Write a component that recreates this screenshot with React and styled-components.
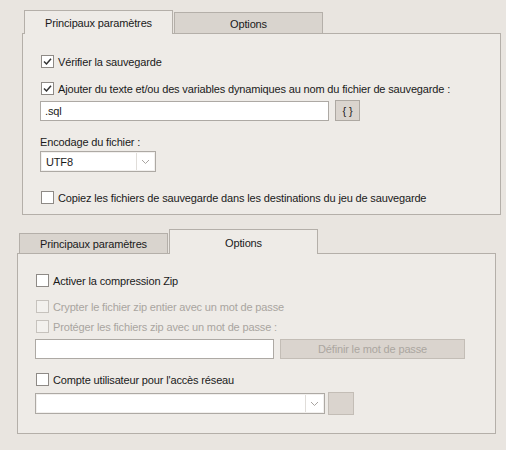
import React from 'react';
import styled, { createGlobalStyle } from 'styled-components';

const GlobalStyle = createGlobalStyle`
  html, body {
    margin: 0;
    padding: 0;
    background: #E9E5E0;
  }
  body {
    font-family: "Liberation Sans", Arial, sans-serif;
    font-size: 11px;
    letter-spacing: -0.15px;
    color: #1a1a1a;
  }
`;

const Page = styled.div`
  width: 506px;
  height: 450px;
  padding-top: 10px;
  box-sizing: border-box;
`;

const TabBlock = styled.div`
  margin-left: ${(p) => p.left}px;
  width: ${(p) => p.width}px;
  margin-top: ${(p) => p.top || 0}px;
`;

const TabStrip = styled.div`
  display: flex;
  align-items: flex-end;
  padding-left: 2px;
  position: relative;
  z-index: 1;
  margin-bottom: -1px;
`;

const Tab = styled.div`
  width: 149px;
  height: ${(p) => p.tall}px;
  box-sizing: border-box;
  display: flex;
  align-items: center;
  justify-content: center;
  padding-top: 1px;
  border: 1px solid #B4AFA9;
  border-bottom: ${(p) => (p.active ? 'none' : '1px solid #B4AFA9')};
  background: ${(p) => (p.active ? '#EEEBE7' : '#D9D4CE')};
  font-size: 11px;
  color: #1a1a1a;
  & + & {
    margin-left: 1px;
  }
`;

const Panel = styled.div`
  background: #EEEBE7;
  border: 1px solid #B4AFA9;
  box-sizing: border-box;
  padding: 0 17px ${(p) => p.bottom}px 17px;
  display: flex;
  flex-direction: column;
  align-items: flex-start;
`;

const Row = styled.div`
  display: flex;
  align-items: center;
  gap: ${(p) => p.gap || 0}px;
  margin-top: ${(p) => p.top || 0}px;
`;

const CheckRow = styled.label`
  display: flex;
  align-items: center;
  height: 13px;
  margin-top: ${(p) => p.top || 0}px;
  margin-left: 1px;
  color: ${(p) => (p.disabled ? '#A9A5A0' : '#1a1a1a')};
  white-space: nowrap;
`;

const Box = styled.span`
  width: 13px;
  height: 13px;
  box-sizing: border-box;
  border: 1px solid ${(p) => (p.disabled ? '#C6C2BD' : '#8E8A86')};
  background: ${(p) => (p.disabled ? '#F3F1EE' : '#FFFFFF')};
  margin-right: 4px;
  display: flex;
  align-items: center;
  justify-content: center;
  flex: none;
`;

const Label = styled.div`
  margin-top: ${(p) => p.top || 0}px;
  height: 13px;
  line-height: 13px;
`;

const TextInput = styled.div`
  width: ${(p) => p.width}px;
  height: 20px;
  box-sizing: border-box;
  border: 1px solid #ADA9A4;
  background: #fff;
  padding: 0 4px;
  display: flex;
  align-items: center;
`;

const Button = styled.div`
  width: ${(p) => p.width}px;
  height: ${(p) => p.height || 21}px;
  box-sizing: border-box;
  background: #DAD4CE;
  border: 1px solid ${(p) => (p.disabled ? '#C3BDB6' : '#ADA8A2')};
  color: ${(p) => (p.disabled ? '#ABA6A0' : '#1a1a1a')};
  display: flex;
  align-items: center;
  justify-content: center;
  font-size: 11px;
`;

const Combo = styled.div`
  width: ${(p) => p.width}px;
  height: 21px;
  box-sizing: border-box;
  border: 1px solid #ADA9A4;
  background: #F2F0EE;
  padding: 1px;
  display: flex;
`;

const ComboText = styled.div`
  flex: 1;
  background: #fff;
  padding-left: 4px;
  display: flex;
  align-items: center;
`;

const ComboArrow = styled.div`
  width: 17px;
  background: #fff;
  border-left: 1px solid #E0DDD9;
  display: flex;
  align-items: center;
  justify-content: center;
`;

const Check = () => (
  <svg width="9" height="9" viewBox="0 0 9 9">
    <path d="M1 4.5 L3.5 7 L8 1.8" fill="none" stroke="#333" strokeWidth="1.5" />
  </svg>
);

const Chevron = () => (
  <svg width="9" height="6" viewBox="0 0 9 6">
    <path d="M1 1 L4.5 4.5 L8 1" fill="none" stroke="#A8A4A0" strokeWidth="1" />
  </svg>
);

const Checkbox = ({ checked, disabled, top, children }) => (
  <CheckRow top={top} disabled={disabled}>
    <Box disabled={disabled}>{checked && <Check />}</Box>
    {children}
  </CheckRow>
);

export default function App() {
  return (
    <Page>
      <GlobalStyle />
      <TabBlock left={22} width={479}>
        <TabStrip>
          <Tab active tall={24}>Principaux paramètres</Tab>
          <Tab tall={22}>Options</Tab>
        </TabStrip>
        <Panel bottom={10}>
          <Checkbox checked top={21}>Vérifier la sauvegarde</Checkbox>
          <Checkbox checked top={14}>
            Ajouter du texte et/ou des variables dynamiques au nom du fichier de sauvegarde :
          </Checkbox>
          <Row top={5} gap={6}>
            <TextInput width={289}>.sql</TextInput>
            <Button width={25}>{'{ }'}</Button>
          </Row>
          <Label top={15}>Encodage du fichier :</Label>
          <Row top={2}>
            <Combo width={116}>
              <ComboText>UTF8</ComboText>
              <ComboArrow>
                <Chevron />
              </ComboArrow>
            </Combo>
          </Row>
          <Checkbox top={19}>
            Copiez les fichiers de sauvegarde dans les destinations du jeu de sauvegarde
          </Checkbox>
        </Panel>
      </TabBlock>

      <TabBlock left={17} width={479} top={14}>
        <TabStrip>
          <Tab tall={21}>Principaux paramètres</Tab>
          <Tab active tall={25}>Options</Tab>
        </TabStrip>
        <Panel bottom={18}>
          <Checkbox top={20}>Activer la compression Zip</Checkbox>
          <Checkbox disabled top={13}>Crypter le fichier zip entier avec un mot de passe</Checkbox>
          <Checkbox disabled top={7}>Protéger les fichiers zip avec un mot de passe :</Checkbox>
          <Row top={6} gap={6}>
            <TextInput width={239} />
            <Button width={185} height={20} disabled>
              Définir le mot de passe
            </Button>
          </Row>
          <Checkbox top={14}>Compte utilisateur pour l'accès réseau</Checkbox>
          <Row top={6} gap={3}>
            <Combo width={290}>
              <ComboText />
              <ComboArrow>
                <Chevron />
              </ComboArrow>
            </Combo>
            <Button width={26} height={23} disabled />
          </Row>
        </Panel>
      </TabBlock>
    </Page>
  );
}
